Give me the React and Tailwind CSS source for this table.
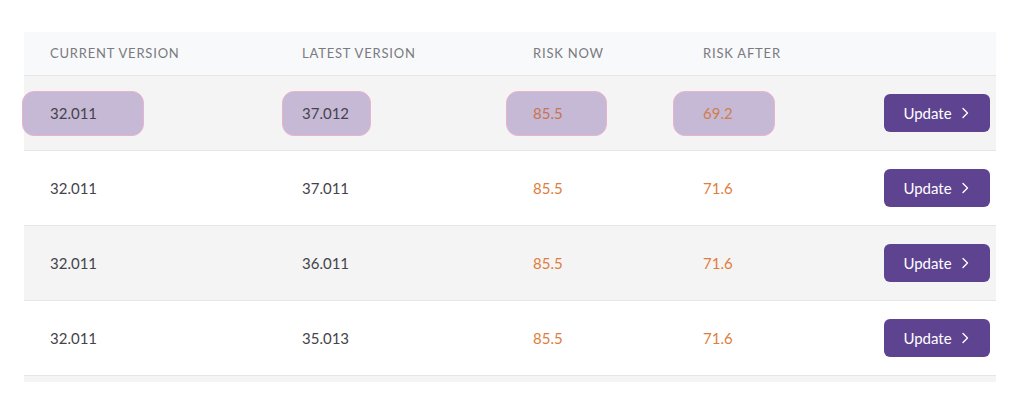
import React from "react";

const rows = [
  { current: "32.011", latest: "37.012", now: "85.5", after: "69.2", highlight: true },
  { current: "32.011", latest: "37.011", now: "85.5", after: "71.6" },
  { current: "32.011", latest: "36.011", now: "85.5", after: "71.6" },
  { current: "32.011", latest: "35.013", now: "85.5", after: "71.6" },
];

// highlight box offsets per column (first row is marked up)
const marks = [
  "-left-[28px] -right-[47px]",
  "-left-[20px] -right-[22px]",
  "-left-[27px] -right-[44px]",
  "-left-[30px] -right-[42px]",
];

const Cell = ({ value, mark, highlight, className }) => (
  <div className={className}>
    <span className="relative inline-block">
      {highlight && (
        <span
          className={`absolute -top-[11px] -bottom-[12px] ${mark} rounded-[12px] bg-[#c6b9d6] border border-[#e9b3cf]`}
        />
      )}
      <span className="relative">{value}</span>
    </span>
  </div>
);

const UpdateButton = () => (
  <button className="flex items-center gap-[9px] h-[38px] w-[106px] justify-center rounded-[6px] bg-[#5e4391] text-white text-[15px] pr-[2px]">
    Update
    <svg width="8" height="12" viewBox="0 0 8 12" fill="none">
      <path d="M2 1.5 6.5 6 2 10.5" stroke="white" strokeWidth="1.4" strokeLinecap="round" strokeLinejoin="round" />
    </svg>
  </button>
);

const grid = "grid grid-cols-[252px_231px_170px_1fr_auto] items-center pl-[26px] pr-[6px]";

export default function App() {
  return (
    <div className="w-[1024px] h-[404px] bg-white pt-[32px] px-[24px] font-['Lato','Open_Sans',sans-serif]">
      <div className="w-[972px]">
        <div className={`${grid} h-[44px] bg-[#f8f9fa] border-b border-[#e6e6e6] text-[13px] tracking-[0.8px] text-[#7a7a80]`}>
          <div>CURRENT VERSION</div>
          <div>LATEST VERSION</div>
          <div>RISK NOW</div>
          <div>RISK AFTER</div>
          <div />
        </div>
        {rows.map((row, index) => (
          <div
            key={index}
            className={`${grid} h-[75px] border-b border-[#e6e6e6] text-[15px] ${
              index % 2 === 0 ? "bg-[#f4f4f4]" : "bg-white"
            }`}
          >
            <Cell value={row.current} mark={marks[0]} highlight={row.highlight} className="text-[#45434a]" />
            <Cell value={row.latest} mark={marks[1]} highlight={row.highlight} className="text-[#45434a]" />
            <Cell value={row.now} mark={marks[2]} highlight={row.highlight} className={row.highlight ? "text-[#c77452]" : "text-[#e07d3c]"} />
            <Cell value={row.after} mark={marks[3]} highlight={row.highlight} className={row.highlight ? "text-[#cf7e4e]" : "text-[#e07d3c]"} />
            <UpdateButton />
          </div>
        ))}
        <div className="h-[6px] bg-[#f4f4f4]" />
      </div>
    </div>
  );
}
